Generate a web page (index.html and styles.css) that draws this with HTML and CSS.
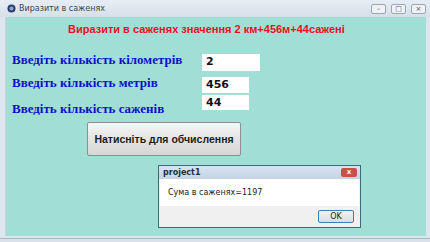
FILE: index.html
```html
<!DOCTYPE html>
<html lang="uk">
<head>
    <meta charset="UTF-8">
    <title>Виразити в саженях</title>
    <link rel="stylesheet" href="styles.css">
</head>
<body>
    <div class="window">
        <div class="titlebar">
            <svg class="app-icon" width="9" height="9" viewBox="0 0 9 9">
                <circle cx="4.5" cy="4.5" r="4" fill="#2c3e6b"/>
                <circle cx="4.5" cy="4.5" r="2" fill="#8fa6cf"/>
            </svg>
            <span class="title">Виразити в саженях</span>
            <div class="controls">
                <span class="ctl">&#8211;</span>
                <span class="ctl">&#9633;</span>
                <span class="ctl">&#215;</span>
            </div>
        </div>
        <div class="client">
            <h1 class="heading">Виразити в саженях значення 2 км+456м+44сажені</h1>

            <div class="form">
                <div class="labels">
                    <label class="lbl l1">Введіть кількість кілометрів</label>
                    <label class="lbl l2">Введіть кількість метрів</label>
                    <label class="lbl l3">Введіть кількість саженів</label>
                </div>
                <div class="inputs">
                    <div class="box wide">2</div>
                    <div class="box b2">456</div>
                    <div class="box b3">44</div>
                </div>
            </div>

            <button class="calc">Натисніть для обчислення</button>
        </div>

        <div class="dialog">
            <div class="dlg-title">
                <span>project1</span>
                <span class="dlg-close">x</span>
            </div>
            <div class="dlg-body">Сума в саженях=1197</div>
            <div class="dlg-foot">
                <button class="ok">OK</button>
            </div>
        </div>
    </div>
</body>
</html>
```

FILE: styles.css
```css
body {
    margin: 0;
    background: #d9e2ea;
    font-family: "DejaVu Sans", Verdana, sans-serif;
}
.window {
    position: relative;
    width: 430px;
    height: 239px;
    background: #dde6ef;
    border-bottom: 1px solid #a9b6c2;
    box-sizing: border-box;
}
.titlebar {
    height: 17px;
    display: flex;
    align-items: center;
    padding-left: 7px;
    background: linear-gradient(#e6edf4, #d6e0ea);
}
.app-icon {
    margin-right: 3px;
}
.title {
    font-size: 8px;
    color: #3c4650;
}
.controls {
    margin-left: auto;
    margin-right: 4px;
    display: flex;
    gap: 5px;
}
.ctl {
    width: 13px;
    height: 8px;
    border: 1px solid #9aa6b2;
    border-radius: 2px;
    background: #eef2f6;
    font-size: 7px;
    line-height: 8px;
    text-align: center;
    color: #555;
}
.client {
    margin: 0 4px 0 5px;
    height: 219px;
    background: #a0ded6;
    border-left: 1px solid #c8d4dc;
    overflow: hidden;
}
.heading {
    margin: 5px 0 0 62px;
    font-family: "Liberation Sans", Arial, sans-serif;
    font-size: 11px;
    font-weight: bold;
    color: #e8101e;
    line-height: 14px;
    white-space: nowrap;
}
.form {
    display: flex;
    margin-top: 18px;
    margin-left: 6px;
}
.labels {
    width: 190px;
    display: flex;
    flex-direction: column;
}
.lbl {
    font-family: "Liberation Serif", "Times New Roman", serif;
    font-weight: bold;
    font-size: 13px;
    line-height: 14px;
    color: #1010c8;
}
.l1 { margin-top: -1px; }
.l2 { margin-top: 9px; }
.l3 { margin-top: 12px; }
.inputs {
    display: flex;
    flex-direction: column;
}
.box {
    width: 43px;
    height: 16px;
    background: #fff;
    font-size: 11px;
    font-weight: bold;
    line-height: 16px;
    padding-left: 4px;
    color: #111;
}
.wide { width: 54px; height: 17px; }
.b2 { margin-top: 6px; }
.b3 { margin-top: 2px; height: 15px; }
.calc {
    display: block;
    margin: 6px 0 0 81px;
    width: 154px;
    height: 34px;
    padding: 0;
    border: 1px solid #8e8e8e;
    border-radius: 2px;
    background: linear-gradient(#f6f6f6, #e4e4e4 50%, #d6d6d6);
    font-family: "Liberation Sans", Arial, sans-serif;
    font-size: 10.5px;
    font-weight: bold;
    color: #1c1c1c;
    white-space: nowrap;
}
.dialog {
    position: absolute;
    left: 158px;
    top: 165px;
    width: 203px;
    height: 63px;
    border: 1px solid #3e6a78;
    background: #f0f0f0;
    box-sizing: border-box;
}
.dlg-title {
    height: 13px;
    display: flex;
    align-items: center;
    padding-left: 4px;
    background: linear-gradient(#d8e4f0, #c4d4e4);
    font-size: 8px;
    font-weight: bold;
    color: #20303c;
}
.dlg-close {
    margin-left: auto;
    margin-right: 3px;
    width: 16px;
    height: 9px;
    background: #c9504a;
    border-radius: 2px;
    color: #fff;
    font-size: 7px;
    line-height: 8px;
    text-align: center;
}
.dlg-body {
    height: 27px;
    background: #fff;
    padding-left: 8px;
    font-size: 8px;
    line-height: 28px;
    color: #222;
    margin: 0 1px;
}
.dlg-foot {
    display: flex;
    justify-content: flex-end;
    padding: 4px 6px 0 0;
}
.ok {
    width: 36px;
    height: 13px;
    padding: 0;
    border: 1px solid #3c7fb1;
    border-radius: 2px;
    background: linear-gradient(#f2f2f2, #dcdcdc);
    font-family: "DejaVu Sans", Verdana, sans-serif;
    font-size: 8px;
    color: #222;
}
```
